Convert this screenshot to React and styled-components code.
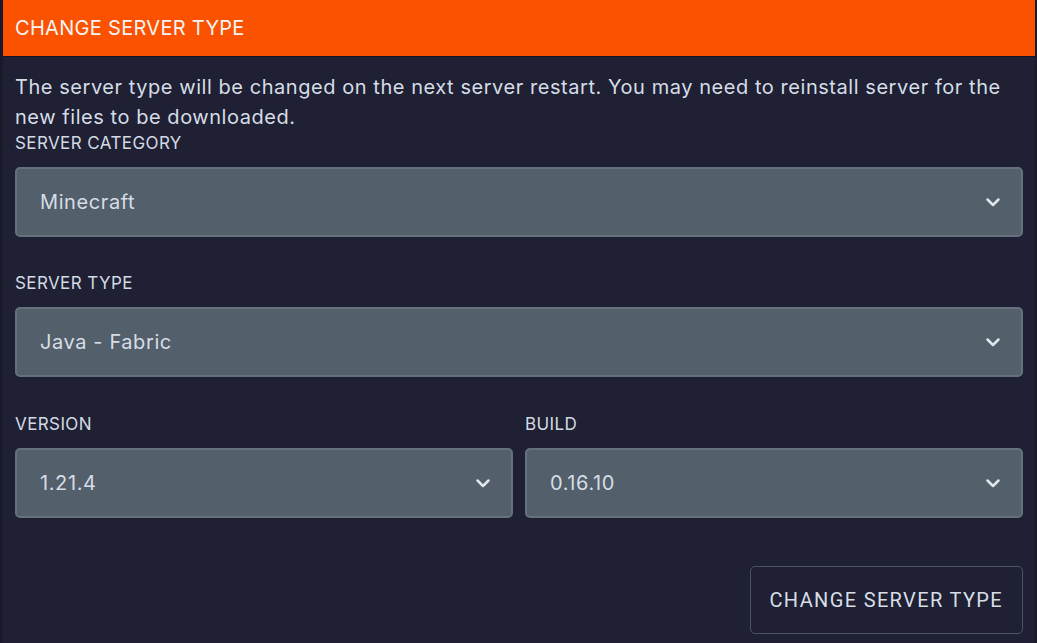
import React from "react";
import styled, { createGlobalStyle } from "styled-components";

const GlobalStyle = createGlobalStyle`
  html, body {
    margin: 0;
    padding: 0;
    background: #191a29;
  }
  body {
    font-family: Inter, "Noto Sans", sans-serif;
  }
`;

const Panel = styled.div`
  margin: 0 2px 0 3px;
  min-height: 643px;
  background: #1f2034;
  color: #d3dae3;
  box-sizing: border-box;
`;

const Header = styled.div`
  height: 56px;
  background: #fa5200;
  border-bottom: 1px solid #14151f;
  display: flex;
  align-items: center;
  padding: 0 12px;
  font-size: 20px;
  color: #f4f4f4;
  letter-spacing: 0.3px;
`;

const Body = styled.div`
  padding: 15px 12px 9px 12px;
  display: flex;
  flex-direction: column;
`;

const Notice = styled.p`
  margin: 0;
  font-size: 20px;
  line-height: 30px;
  letter-spacing: 0.55px;
  color: #d6dde6;
`;

const Field = styled.div`
  display: flex;
  flex-direction: column;
  flex: 1;
  margin-top: ${(p) => p.$top || 0}px;
`;

const Label = styled.div`
  font-size: 17px;
  line-height: 22px;
  letter-spacing: 0.4px;
  color: #d3dae3;
  margin-bottom: 13px;
`;

const Row = styled.div`
  display: flex;
  gap: 12px;
  margin-top: 36px;
`;

const Select = styled.div`
  height: 70px;
  box-sizing: border-box;
  background: #535f6b;
  border: 2px solid #65717d;
  border-radius: 5px;
  display: flex;
  align-items: center;
  justify-content: space-between;
  padding: 0 20px 0 23px;
  font-size: 20px;
  letter-spacing: 0.6px;
  color: #d6dde6;
`;

const Footer = styled.div`
  display: flex;
  justify-content: flex-end;
  margin-top: 48px;
`;

const Button = styled.button`
  height: 68px;
  padding: 0 19px;
  background: transparent;
  border: 1px solid #4b5366;
  border-radius: 5px;
  color: #d8dee6;
  font-family: Roboto, "Noto Sans", sans-serif;
  font-size: 20px;
  letter-spacing: 1.35px;
`;

const Chevron = () => (
  <svg width="16" height="16" viewBox="0 0 16 16" fill="none">
    <path
      d="M2.5 5.5L8 11l5.5-5.5"
      stroke="#e1e6ec"
      strokeWidth="2.5"
      strokeLinecap="round"
      strokeLinejoin="round"
    />
  </svg>
);

const Dropdown = ({ label, value, top }) => (
  <Field $top={top}>
    <Label>{label}</Label>
    <Select>
      <span>{value}</span>
      <Chevron />
    </Select>
  </Field>
);

export default function App() {
  return (
    <>
      <GlobalStyle />
      <Panel>
        <Header>CHANGE SERVER TYPE</Header>
        <Body>
          <Notice>
            The server type will be changed on the next server restart. You may
            need to reinstall server for the new files to be downloaded.
          </Notice>
          <Dropdown label="SERVER CATEGORY" value="Minecraft" />
          <Dropdown label="SERVER TYPE" value="Java - Fabric" top={35} />
          <Row>
            <Dropdown label="VERSION" value="1.21.4" />
            <Dropdown label="BUILD" value="0.16.10" />
          </Row>
          <Footer>
            <Button>CHANGE SERVER TYPE</Button>
          </Footer>
        </Body>
      </Panel>
    </>
  );
}
